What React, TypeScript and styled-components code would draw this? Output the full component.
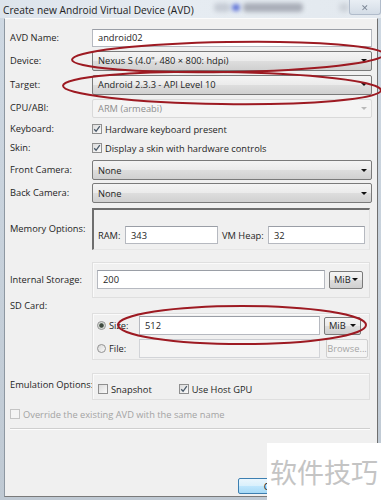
import React from "react";
import styled, { createGlobalStyle, css } from "styled-components";

const Global = createGlobalStyle`
  html, body { margin: 0; padding: 0; background: #fff; }
  body { font-family: "Open Sans", "Noto Sans", sans-serif; }
`;

const FONT = `"Open Sans", "Noto Sans", "Liberation Sans", sans-serif`;

const Window = styled.div`
  position: relative;
  width: 381px;
  height: 500px;
  background: linear-gradient(#cfd9e3, #bfc9d3);
  display: flex;
  flex-direction: column;
  overflow: hidden;
  font-family: ${FONT};
  font-size: 9.3px;
  color: #1e1e1e;
`;

const TitleBar = styled.div`
  height: 18px;
  flex: none;
  display: flex;
  align-items: center;
  background: linear-gradient(90deg, #dde4ec, #e6ecf2 50%, #e3e9ef);
  padding-left: 3px;
`;

const Title = styled.span`
  font-size: 10.2px;
  color: #222;
  white-space: nowrap;
  margin-top: 1px;
`;

const Blur = styled.span<{ $w: number; $c: string; $ml: number; $h?: number }>`
  display: block;
  flex: none;
  width: ${(p) => p.$w}px;
  height: ${(p) => p.$h ?? 9}px;
  margin-left: ${(p) => p.$ml}px;
  background: ${(p) => p.$c};
  border-radius: 4px;
  filter: blur(2px);
  align-self: center;
  margin-bottom: 4px;
`;

const CloseBtn = styled.span`
  flex: none;
  width: 30px;
  height: 14px;
  margin-left: auto;
  margin-right: 4px;
  align-self: flex-start;
  background: linear-gradient(#e9eef4, #d3dce6);
  border: 1px solid #b1bccb;
  border-top: none;
  border-radius: 0 0 3px 3px;
  display: flex;
  align-items: center;
  justify-content: center;
  color: #7b8594;
  font-size: 9px;
  filter: blur(0.5px);
`;

const Body = styled.div`
  flex: 1;
  margin: 0 3px 3px 4px;
  background: #f0f0f0;
  border-left: 1px solid #8d97a1;
  border-top: 1px solid #fbfbfb;
  border-right: 1px solid #6f6f6f;
  border-bottom: 1px solid #7a7a7a;
  display: flex;
  flex-direction: column;
  position: relative;
`;

const Form = styled.div`
  display: flex;
  flex-direction: column;
  padding: 7px 5px 0 5px;
`;

const Row = styled.div<{ $h: number; $mt?: number; $top?: boolean }>`
  display: grid;
  grid-template-columns: 82px 280px;
  height: ${(p) => p.$h}px;
  margin-top: ${(p) => p.$mt ?? 0}px;
  align-items: ${(p) => (p.$top ? "start" : "center")};
`;

const Label = styled.span<{ $pt?: number }>`
  line-height: 14px;
  white-space: nowrap;
  padding-top: ${(p) => p.$pt ?? 0}px;
`;

const TextInput = styled.div<{ $w?: number; $h?: number; $disabled?: boolean }>`
  box-sizing: border-box;
  width: ${(p) => (p.$w ? `${p.$w}px` : "100%")};
  height: ${(p) => p.$h ?? 18}px;
  background: ${(p) => (p.$disabled ? "#f4f4f4" : "#fff")};
  border: 1px solid ${(p) => (p.$disabled ? "#d2d4d8" : "#b6b9c0")};
  border-top-color: ${(p) => (p.$disabled ? "#c9cbd0" : "#9a9ea6")};
  padding-left: 5px;
  display: flex;
  align-items: center;
  white-space: nowrap;
  flex: none;
`;

const Combo = styled.div<{ $w?: number; $h?: number; $disabled?: boolean }>`
  box-sizing: border-box;
  width: ${(p) => (p.$w ? `${p.$w}px` : "100%")};
  height: ${(p) => p.$h ?? 20}px;
  border-radius: 2px;
  display: flex;
  align-items: center;
  padding-left: ${(p) => (p.$w ? 4 : 5)}px;
  white-space: nowrap;
  flex: none;
  ${(p) =>
    p.$disabled
      ? css`
          background: #f4f4f4;
          border: 1px solid #d9d9d9;
          color: #8e8e8e;
        `
      : css`
          background: linear-gradient(#f4f4f4 0%, #ebebeb 48%, #dddddd 52%, #d0d0d0 100%);
          border: 1px solid #7a7a7a;
        `}
`;

const ComboText = styled.span`
  flex: 1;
`;

const Arrow = styled.span<{ $disabled?: boolean }>`
  width: 0;
  height: 0;
  border-left: 3px solid transparent;
  border-right: 3px solid transparent;
  border-top: 3px solid ${(p) => (p.$disabled ? "#b9b9b9" : "#111")};
  margin-right: 4px;
  flex: none;
`;

const CheckLine = styled.div<{ $disabled?: boolean; $ml?: number }>`
  display: flex;
  align-items: center;
  gap: 3px;
  color: ${(p) => (p.$disabled ? "#a3a3a3" : "inherit")};
  margin-left: ${(p) => p.$ml ?? 0}px;
  white-space: nowrap;
`;

const Box = styled.span<{ $disabled?: boolean }>`
  box-sizing: border-box;
  width: 10px;
  height: 10px;
  flex: none;
  border: 1px solid ${(p) => (p.$disabled ? "#c4c4c4" : "#8f8f8f")};
  background: ${(p) => (p.$disabled ? "#f4f4f4" : "linear-gradient(135deg, #dcdcdc, #fafafa)")};
  display: flex;
  align-items: center;
  justify-content: center;
`;

const Radio = styled.span<{ $on?: boolean }>`
  box-sizing: border-box;
  width: 9px;
  height: 9px;
  border-radius: 50%;
  flex: none;
  border: 1px solid #929292;
  background: ${(p) =>
    p.$on
      ? "radial-gradient(circle, #3f4a3f 0 1.8px, #c9d0c9 2.6px, #f3f3f3 4px)"
      : "linear-gradient(135deg, #d8d8d8, #fafafa)"};
`;

const Group = styled.div<{ $h: number; $dark?: boolean; $pt?: number; $col?: boolean }>`
  box-sizing: border-box;
  width: 278px;
  height: ${(p) => p.$h}px;
  padding: ${(p) => p.$pt ?? 0}px 4px 0 4px;
  display: flex;
  flex-direction: ${(p) => (p.$col ? "column" : "row")};
  ${(p) =>
    p.$dark
      ? css`
          border-top: 2px solid #6e6e6e;
          border-left: 2px solid #6e6e6e;
          border-right: 1px solid #e2e2e2;
          border-bottom: 1px solid #e6e6e6;
        `
      : css`
          border: 1px solid #dfdfdf;
          box-shadow: inset 1px 1px 0 #fafafa;
        `}
`;

const InRow = styled.div<{ $h: number; $gap?: number }>`
  display: flex;
  align-items: center;
  height: ${(p) => p.$h}px;
  gap: ${(p) => p.$gap ?? 0}px;
`;

const SmallLabel = styled.span<{ $w: number; $pl?: number }>`
  width: ${(p) => p.$w}px;
  padding-left: ${(p) => p.$pl ?? 0}px;
  box-sizing: border-box;
  flex: none;
  white-space: nowrap;
`;

const Spacer = styled.span<{ $w: number }>`
  width: ${(p) => p.$w}px;
  flex: none;
`;

const SdWrap = styled.div`
  padding-top: 15px;
`;

const Button = styled.div<{ $disabled?: boolean; $w: number; $h: number }>`
  box-sizing: border-box;
  width: ${(p) => p.$w}px;
  height: ${(p) => p.$h}px;
  border-radius: 2px;
  display: flex;
  align-items: center;
  justify-content: center;
  flex: none;
  ${(p) =>
    p.$disabled
      ? css`
          border: 1px solid #cfcfcf;
          background: #f4f4f4;
          color: #a6a6a6;
        `
      : css`
          border: 1px solid #3c7fb1;
          background: linear-gradient(#eaf6fd 0%, #d9f0fc 48%, #bee6fd 52%, #a7d9f5 100%);
          color: #111;
        `}
`;

const FullLine = styled.div`
  grid-column: 1 / span 2;
`;

const Separator = styled.div`
  margin: 4px 2px 0 0;
  height: 1px;
  background: #cfcfcf;
  border-bottom: 1px solid #fdfdfd;
`;

const Footer = styled.div`
  flex: 1;
  display: flex;
  align-items: flex-end;
  padding: 0 0 2px 233px;
`;

const ButtonClip = styled.div`
  width: 29px;
  overflow: hidden;
  display: flex;
`;

const Watermark = styled.div`
  position: absolute;
  left: 267px;
  top: 443px;
  width: 114px;
  height: 57px;
  background: #fff;
  display: flex;
  align-items: center;
  justify-content: center;
  font-family: "Noto Sans CJK SC", sans-serif;
  font-size: 27px;
  color: #c4c4c4;
`;

const Annotations = styled.svg`
  position: absolute;
  left: 0;
  top: 0;
  pointer-events: none;
`;

const Check = ({ disabled }: { disabled?: boolean }) => (
  <svg width="8" height="8" viewBox="0 0 8 8">
    <path
      d="M1.2 4.2 L3.1 6.3 L6.8 1.2"
      fill="none"
      stroke={disabled ? "#aaa" : "#4a5a6a"}
      strokeWidth="1.3"
    />
  </svg>
);

const SelectBox = ({ value, disabled, w, h }: { value: string; disabled?: boolean; w?: number; h?: number }) => (
  <Combo $disabled={disabled} $w={w} $h={h}>
    <ComboText>{value}</ComboText>
    <Arrow $disabled={disabled} />
  </Combo>
);

const DEVICE = 'Nexus S (4.0", 480 × 800: hdpi)';

export default function App() {
  return (
    <>
      <Global />
      <Window>
        <TitleBar>
          <Title>Create new Android Virtual Device (AVD)</Title>
          <Blur $w={16} $c="#c6ccd5" $ml={20} />
          <Blur $w={8} $c="#5b6fd6" $ml={2} $h={7} />
          <Blur $w={60} $c="#a9aeb8" $ml={3} />
          <Blur $w={10} $c="#cdd3da" $ml={36} />
          <CloseBtn>✕</CloseBtn>
        </TitleBar>
        <Body>
          <Form>
            <Row $h={23}>
              <Label>AVD Name:</Label>
              <TextInput>android02</TextInput>
            </Row>
            <Row $h={23}>
              <Label>Device:</Label>
              <SelectBox value={DEVICE} />
            </Row>
            <Row $h={25}>
              <Label>Target:</Label>
              <SelectBox value="Android 2.3.3 - API Level 10" />
            </Row>
            <Row $h={22}>
              <Label>CPU/ABI:</Label>
              <SelectBox value="ARM (armeabi)" disabled h={19} />
            </Row>
            <Row $h={20}>
              <Label>Keyboard:</Label>
              <CheckLine>
                <Box><Check /></Box>
                Hardware keyboard present
              </CheckLine>
            </Row>
            <Row $h={18}>
              <Label>Skin:</Label>
              <CheckLine>
                <Box><Check /></Box>
                Display a skin with hardware controls
              </CheckLine>
            </Row>
            <Row $h={26}>
              <Label>Front Camera:</Label>
              <SelectBox value="None" />
            </Row>
            <Row $h={20}>
              <Label>Back Camera:</Label>
              <SelectBox value="None" />
            </Row>
            <Row $h={42} $mt={5}>
              <Label>Memory Options:</Label>
              <Group $h={42} $dark $pt={16}>
                <InRow $h={18}>
                  <SmallLabel $w={27}>RAM:</SmallLabel>
                  <TextInput $w={93}>343</TextInput>
                  <SmallLabel $w={50} $pl={4}>VM Heap:</SmallLabel>
                  <TextInput $w={97}>32</TextInput>
                </InRow>
              </Group>
            </Row>
            <Row $h={36} $mt={12}>
              <Label>Internal Storage:</Label>
              <Group $h={36} $pt={7}>
                <InRow $h={19} $gap={4}>
                  <TextInput $w={228} $h={19}>200</TextInput>
                  <SelectBox value="MiB" w={34} h={18} />
                </InRow>
              </Group>
            </Row>
            <Row $h={62} $top>
              <Label $pt={1}>SD Card:</Label>
              <SdWrap>
                <Group $h={47} $pt={2} $col>
                  <InRow $h={19}>
                    <Radio $on />
                    <SmallLabel $w={33} $pl={3}>Size:</SmallLabel>
                    <TextInput $w={181} $h={19}>512</TextInput>
                    <Spacer $w={4} />
                    <SelectBox value="MiB" w={37} h={18} />
                  </InRow>
                  <InRow $h={4} />
                  <InRow $h={19}>
                    <Radio />
                    <SmallLabel $w={33} $pl={3}>File:</SmallLabel>
                    <TextInput $w={181} $h={19} $disabled />
                    <Spacer $w={6} />
                    <Button $disabled $w={42} $h={19}>Browse...</Button>
                  </InRow>
                </Group>
              </SdWrap>
            </Row>
            <Row $h={27} $mt={13} $top>
              <Label $pt={5}>Emulation Options:</Label>
              <Group $h={27} $pt={9}>
                <InRow $h={12}>
                  <CheckLine $ml={1}>
                    <Box />
                    Snapshot
                  </CheckLine>
                  <CheckLine $ml={27}>
                    <Box><Check /></Box>
                    Use Host GPU
                  </CheckLine>
                </InRow>
              </Group>
            </Row>
            <Row $h={20} $mt={4}>
              <FullLine>
                <CheckLine $disabled>
                  <Box $disabled />
                  Override the existing AVD with the same name
                </CheckLine>
              </FullLine>
            </Row>
            <Separator />
          </Form>
          <Footer>
            <ButtonClip>
              <Button $w={80} $h={16}>Cancel</Button>
            </ButtonClip>
          </Footer>
        </Body>
        <Watermark>软件技巧</Watermark>
        <Annotations width="381" height="500" viewBox="0 0 381 500">
          <g fill="none" stroke="#9d1a22" strokeWidth="2">
            <ellipse cx="228" cy="57" rx="156" ry="15" transform="rotate(-1 228 57)" />
            <ellipse cx="222" cy="88" rx="159" ry="16" transform="rotate(0.8 222 88)" />
            <ellipse cx="242" cy="325" rx="124" ry="19" />
          </g>
        </Annotations>
      </Window>
    </>
  );
}
